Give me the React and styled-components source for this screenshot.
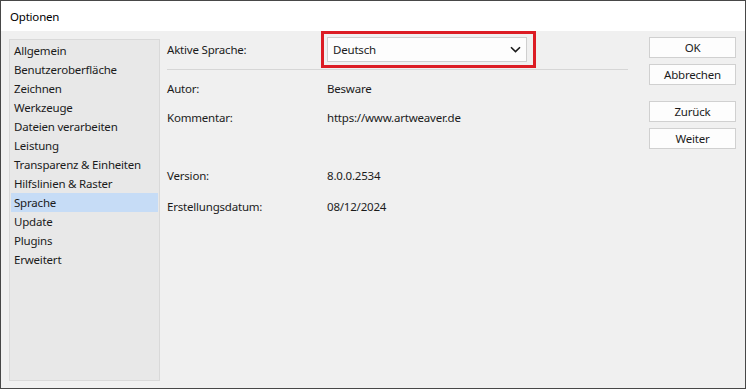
import React from "react";
import styled, { createGlobalStyle } from "styled-components";

const Global = createGlobalStyle`
  html, body { margin: 0; padding: 0; background: #f0f0f0; }
  body {
    font-family: "Noto Sans", "Open Sans", sans-serif;
    font-size: 11.5px;
    letter-spacing: -0.2px;
    color: #1b1b1b;
  }
  * { box-sizing: border-box; }
`;

const Window = styled.div`
  width: 746px;
  height: 389px;
  border: 1px solid #474747;
  background: #f0f0f0;
  display: flex;
  flex-direction: column;
  overflow: hidden;
`;

const TitleBar = styled.div`
  height: 30px;
  background: #ffffff;
  display: flex;
  align-items: center;
  padding-left: 9px;
  color: #000;
`;

const Body = styled.div`
  flex: 1;
  display: flex;
  padding: 6px 9px 7px 8px;
  min-height: 0;
`;

const Sidebar = styled.ul`
  list-style: none;
  margin: 2px 0 0 0;
  padding: 1px;
  width: 151px;
  background: #e8e8e8;
  border: 1px solid #d9d9d9;
`;

const NavItem = styled.li`
  height: 19px;
  line-height: 19px;
  padding-left: 3px;
  white-space: nowrap;
  background: ${(p) => (p.$active ? "#c6dcf6" : "transparent")};
`;

const Content = styled.div`
  flex: 1;
  margin-left: 7px;
  margin-right: 21px;
  display: flex;
  flex-direction: column;
`;

const Row = styled.div`
  display: grid;
  grid-template-columns: 160px 1fr;
  align-items: center;
  height: ${(p) => p.$h || 19}px;
  margin-top: ${(p) => p.$mt || 0}px;
`;

const Label = styled.span`
  white-space: nowrap;
`;

const Value = styled.span`
  white-space: nowrap;
`;

const SelectWrap = styled.div`
  position: relative;
  width: 200px;
  height: 25px;
  &::after {
    content: "";
    position: absolute;
    top: -6px;
    left: -6px;
    right: -9px;
    bottom: -6px;
    border: 3px solid #dc1c24;
    pointer-events: none;
  }
`;

const Select = styled.div`
  height: 100%;
  background: #fdfdfd;
  border: 1px solid #cfcfcf;
  display: flex;
  align-items: center;
  justify-content: space-between;
  padding: 0 5px 0 5px;
`;

const Separator = styled.div`
  height: 1px;
  background: #d6d6d6;
  margin-top: 7px;
`;

const Buttons = styled.div`
  width: 87px;
  display: flex;
  flex-direction: column;
`;

const Button = styled.button`
  height: 21px;
  margin-top: ${(p) => p.$mt || 0}px;
  background: #fdfdfd;
  border: 1px solid #d0d0d0;
  font: inherit;
  letter-spacing: inherit;
  color: #1b1b1b;
  padding: 0;
`;

const Chevron = () => (
  <svg width="11" height="7" viewBox="0 0 11 7" aria-hidden="true">
    <path d="M1 1.2 L5.5 5.6 L10 1.2" fill="none" stroke="#1b1b1b" strokeWidth="1.6" />
  </svg>
);

const items = [
  "Allgemein",
  "Benutzeroberfläche",
  "Zeichnen",
  "Werkzeuge",
  "Dateien verarbeiten",
  "Leistung",
  "Transparenz & Einheiten",
  "Hilfslinien & Raster",
  "Sprache",
  "Update",
  "Plugins",
  "Erweitert",
];

export default function App() {
  return (
    <>
      <Global />
      <Window>
        <TitleBar>Optionen</TitleBar>
        <Body>
          <Sidebar>
            {items.map((it) => (
              <NavItem key={it} $active={it === "Sprache"}>
                {it}
              </NavItem>
            ))}
          </Sidebar>
          <Content>
            <Row $h={25}>
              <Label>Aktive Sprache:</Label>
              <SelectWrap>
                <Select>
                  <span>Deutsch</span>
                  <Chevron />
                </Select>
              </SelectWrap>
            </Row>
            <Separator />
            <Row $mt={9}>
              <Label>Autor:</Label>
              <Value>Besware</Value>
            </Row>
            <Row $mt={10}>
              <Label>Kommentar:</Label>
              <Value>https://www.artweaver.de</Value>
            </Row>
            <Row $mt={39}>
              <Label>Version:</Label>
              <Value>8.0.0.2534</Value>
            </Row>
            <Row $mt={12}>
              <Label>Erstellungsdatum:</Label>
              <Value>08/12/2024</Value>
            </Row>
          </Content>
          <Buttons>
            <Button>OK</Button>
            <Button $mt={6}>Abbrechen</Button>
            <Button $mt={16}>Zurück</Button>
            <Button $mt={6}>Weiter</Button>
          </Buttons>
        </Body>
      </Window>
    </>
  );
}
